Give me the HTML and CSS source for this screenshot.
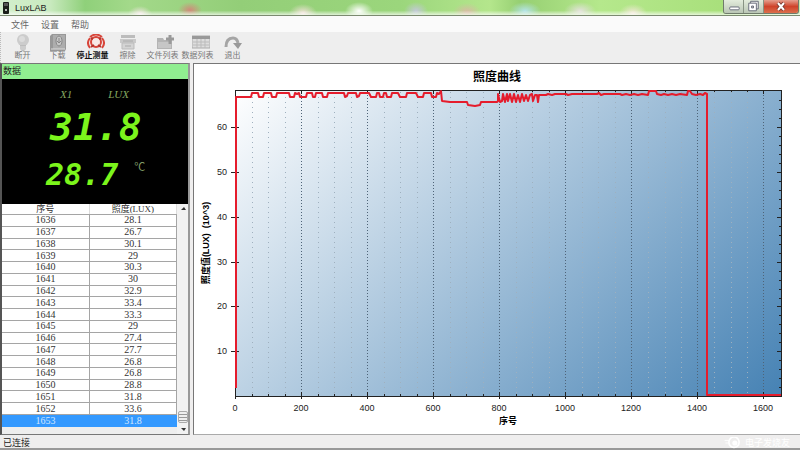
FILE: index.html
```html
<!DOCTYPE html>
<html lang="zh-CN">
<head>
<meta charset="utf-8">
<title>LuxLAB</title>
<link rel="stylesheet" href="styles.css">
</head>
<body>
<header class="titlebar">
  <svg class="app-icon" viewBox="0 0 6 12" aria-hidden="true"><rect width="6" height="12" rx="1" fill="#1b1f1a"/><rect x="1" y="1" width="4" height="3" fill="#555"/><circle cx="3" cy="8" r="1" fill="#eee"/></svg>
  <span class="app-name">LuxLAB</span>
  <div class="window-buttons">
    <button class="win" aria-label="最小化"><svg viewBox="0 0 20 13"><rect x="6" y="7" width="10" height="3" rx="1" fill="#fff" stroke="#666a78"/></svg></button>
    <button class="win" aria-label="还原"><svg viewBox="0 0 20 13"><path d="M7 1h8v8h-8z" fill="#eee" stroke="#666a78"/><path d="M5 3h8v8h-8z" fill="#fff" stroke="#666a78"/><path d="M8 6h2v2h-2z" fill="#ccc" stroke="#666a78"/></svg></button>
    <button class="win win-close" aria-label="关闭"><svg viewBox="0 0 34 13"><path d="M14 3l6 7M20 3l-6 7" stroke="#7b3b33" stroke-width="4"/><path d="M14 3l6 7M20 3l-6 7" stroke="#fff" stroke-width="2"/></svg></button>
  </div>
</header>
<nav class="menubar">
  <button>文件</button><button>设置</button><button>帮助</button>
</nav>
<div class="toolbar">
  <button class="tool"><svg viewBox="0 0 18 17"><circle cx="9" cy="6" r="6" fill="#ccc"/><circle cx="8" cy="5" r="3" fill="#dcdcdc"/><path d="M6 11h6v4l-2 2h-2l-2-2z" fill="#bdbdbd"/><path d="M6 13h6M6 15h6" stroke="#ddd"/></svg><span>断开</span></button>
  <button class="tool"><svg viewBox="0 0 18 17"><path d="M1 2l2-2h14v15l-1 2h-15z" fill="#989898"/><path d="M4 1h12v14h-12z" fill="#adadad"/><ellipse cx="10" cy="7" rx="3" ry="5" fill="#c8c8c8" stroke="#888"/><path d="M10 4v5M8 7l2 2 2-2" stroke="#888" fill="none"/><path d="M2 15h14" stroke="#ddd"/></svg><span>下载</span></button>
  <button class="tool tool-on"><svg class="shift" viewBox="0 0 18 17"><circle cx="9" cy="8" r="5" fill="#f8e9e6" stroke="#d8453a" stroke-width="2"/><path d="M3 3q6-5 12 0" fill="none" stroke="#d8453a" stroke-width="2"/><path d="M3 4q-4 5 0 10M15 4q4 5 0 10" fill="none" stroke="#d8453a" stroke-width="2"/><path d="M4 13l3-2M14 13l-3-2M4 4l2 1M14 4l-2 1" stroke="#b3332c" stroke-width="2"/></svg><span>停止测量</span></button>
  <button class="tool"><svg viewBox="0 0 18 17"><path d="M2 1h14v3h-14z" fill="#bcbcbc"/><path d="M1 5h16v4h-16z" fill="#c9c9c9"/><path d="M3 9h12v6h-12z" fill="#d4d4d4" stroke="#bbb"/><path d="M4 7h10M6 12h6" stroke="#aaa"/></svg><span>擦除</span></button>
  <button class="tool"><svg class="shift" viewBox="0 0 18 17"><path d="M0 4h6l1 2h8v9h-15z" fill="#b4b4b4"/><path d="M1 8h13v6h-13z" fill="#c6c6c6"/><path d="M13 1v9M9 5h8" stroke="#999" stroke-width="3"/></svg><span>文件列表</span></button>
  <button class="tool"><svg class="shift" viewBox="0 0 18 17"><path d="M0 2h18v12h-18z" fill="#ddd" stroke="#aaa"/><path d="M0 2h18v3h-18z" fill="#999"/><path d="M1 8h16M1 11h16M5 5v9M9 5v9M13 5v9" stroke="#bbb"/></svg><span>数据列表</span></button>
  <button class="tool"><svg viewBox="0 0 18 17"><path d="M2 13q0-9 7-9q4 0 5 5" fill="none" stroke="#a5a5a5" stroke-width="3"/><path d="M9 9h9l-4 6z" fill="#999"/></svg><span>退出</span></button>
</div>
<main class="workspace">
  <section class="panel">
    <h2 class="panel-title">数据</h2>
    <div class="readout">
      <div class="modes"><span>X1</span><span>LUX</span></div>
      <div class="lux">31.8</div>
      <div class="temp"><span class="temp-value">28.7</span><span class="unit">℃</span></div>
    </div>
    <div class="records">
      <table>
        <thead><tr><th>序号</th><th>照度(LUX)</th></tr></thead>
        <tbody>
          <tr><td>1636</td><td>28.1</td></tr>
          <tr><td>1637</td><td>26.7</td></tr>
          <tr><td>1638</td><td>30.1</td></tr>
          <tr><td>1639</td><td>29</td></tr>
          <tr><td>1640</td><td>30.3</td></tr>
          <tr><td>1641</td><td>30</td></tr>
          <tr><td>1642</td><td>32.9</td></tr>
          <tr><td>1643</td><td>33.4</td></tr>
          <tr><td>1644</td><td>33.3</td></tr>
          <tr><td>1645</td><td>29</td></tr>
          <tr><td>1646</td><td>27.4</td></tr>
          <tr><td>1647</td><td>27.7</td></tr>
          <tr><td>1648</td><td>26.8</td></tr>
          <tr><td>1649</td><td>26.8</td></tr>
          <tr><td>1650</td><td>28.8</td></tr>
          <tr><td>1651</td><td>31.8</td></tr>
          <tr><td>1652</td><td>33.6</td></tr>
          <tr class="selected"><td>1653</td><td>31.8</td></tr>
        </tbody>
      </table>
      <div class="scrollbar" aria-hidden="true">
        <svg viewBox="0 0 12 10"><path d="M4 6h5l-2-3z" fill="#333"/></svg>
        <i class="thumb"></i>
        <svg viewBox="0 0 12 10"><path d="M4 4h5l-2 3z" fill="#333"/></svg>
      </div>
    </div>
  </section>
  <section class="chart">
    <svg viewBox="194 64 606 370" role="img" aria-label="照度曲线">
      <defs>
        <linearGradient id="sky" gradientUnits="userSpaceOnUse" x1="235" y1="90" x2="660" y2="515"><stop offset="0" stop-color="#fff"/><stop offset="1" stop-color="#4682b4"/></linearGradient>
      </defs>
      <text class="chart-title" x="497" y="81">照度曲线</text>
      <rect x="235" y="90" width="546" height="306" fill="url(#sky)"/>
      <path class="grid-minor" d="M252 92V395M268 92V395M285 92V395M318 92V395M334 92V395M351 92V395M384 92V395M400 92V395M417 92V395M450 92V395M466 92V395M483 92V395M516 92V395M532 92V395M549 92V395M582 92V395M598 92V395M615 92V395M648 92V395M665 92V395M681 92V395M714 92V395M731 92V395M747 92V395"/>
      <path class="grid-major" d="M301 92V395M367 92V395M433 92V395M499 92V395M565 92V395M631 92V395M697 92V395M763 92V395"/>
      <path class="axis" d="M235 90H781V396H235z"/>
      <path class="axis" d="M231 127H239M231 172H239M231 217H239M231 262H239M231 306H239M231 351H239M777 127H781M777 172H781M777 217H781M777 262H781M777 306H781M777 351H781M779 100H781M779 109H781M779 118H781M779 136H781M779 145H781M779 154H781M779 163H781M779 181H781M779 190H781M779 199H781M779 208H781M779 226H781M779 235H781M779 244H781M779 253H781M779 271H781M779 280H781M779 289H781M779 298H781M779 315H781M779 324H781M779 333H781M779 342H781M779 360H781M779 369H781M779 378H781M779 387H781"/>
      <path class="axis" d="M235 392V399M301 392V399M367 392V399M433 392V399M499 392V399M565 392V399M631 392V399M697 392V399M763 392V399M301 90V94M367 90V94M433 90V94M499 90V94M565 90V94M631 90V94M697 90V94M763 90V94M252 394V396M268 394V396M285 394V396M318 394V396M334 394V396M351 394V396M384 394V396M400 394V396M417 394V396M450 394V396M466 394V396M483 394V396M516 394V396M532 394V396M549 394V396M582 394V396M598 394V396M615 394V396M648 394V396M665 394V396M681 394V396M714 394V396M731 394V396M747 394V396M516 90V92M532 90V92M549 90V92M582 90V92M598 90V92M615 90V92M665 90V92M714 90V92M731 90V92M747 90V92"/>
      <path class="series" d="M236 388V97H251L252 93H258L259 97H263L264 93H271L272 97H276L277 93H289L290 97H294L295 93L297 94L299 93L300 97H306L307 93H312L313 97H315L316 93H322L323 97H327L328 93H344L345 97L347 96L348 93H356L357 97L359 96L360 93H369L371 97H376L377 93H379L380 97H383L384 93H386L387 97H391L392 93H398L400 97H406L407 93H416L418 97H423L424 93H431L432 97H436L437 93L439 94L441 91L442 101L450 102H467L468 105L475 106L480 105L481 102H497L498 101V94L500 102L502 101L503 94L505 102L507 94L508 101L510 94L512 102L514 94L516 102L518 95L520 102L522 94L524 101L526 95L528 101L530 95L532 94L533 101L535 95L537 95L538 102L539 95H546L548 94L552 95L555 94H566L568 95L572 94H597L599 93L601 95L604 94H620L622 95L626 94L630 95L634 94L638 95L642 94L648 95L649 91H656L657 94L661 95L664 94L668 95L672 94L676 95L680 94L687 95L688 91H690L692 94L696 95L700 94L703 95L705 93L707 94V395H781"/>
      <g class="ticks-y"><text x="227" y="130">60</text><text x="227" y="175">50</text><text x="227" y="220">40</text><text x="227" y="265">30</text><text x="227" y="309">20</text><text x="227" y="354">10</text></g>
      <g class="ticks-x"><text x="235" y="411">0</text><text x="301" y="411">200</text><text x="367" y="411">400</text><text x="433" y="411">600</text><text x="499" y="411">800</text><text x="565" y="411">1000</text><text x="631" y="411">1200</text><text x="697" y="411">1400</text><text x="763" y="411">1600</text></g>
      <text class="axis-title" x="508" y="424">序号</text>
      <text class="axis-title" transform="translate(209 243) rotate(-90)">照度值(LUX)  (10^3)</text>
    </svg>
  </section>
</main>
<footer class="statusbar"><span>已连接</span>
  <div class="watermark"><svg viewBox="0 0 22 14" aria-hidden="true"><circle cx="11" cy="6" r="6" fill="none" stroke="#fff" stroke-width="2"/><circle cx="12" cy="7" r="3" fill="#fff"/><path d="M0 4h6M1 7h4" stroke="#fff"/></svg><span>电子发烧友</span></div>
</footer>
</body>
</html>
```
FILE: styles.css
```css
* { box-sizing: border-box; }
body {
  margin: 0;
  min-height: 100vh;
  display: flex;
  flex-direction: column;
  background: #efeeee;
  color: #222;
  font: 9px/12px "Liberation Sans", "Noto Sans CJK SC", sans-serif;
}
button { border: 0; padding: 0; background: none; font: inherit; color: inherit; }
svg { display: block; }

.titlebar {
  display: flex;
  align-items: center;
  height: 16px;
  padding-left: 3px;
  border-bottom: 1px solid #7b8a70;
  background:
    linear-gradient(#fff0 70%, #ffffffb0),
    radial-gradient(ellipse 12px 8px at 140px 14px, #f5e6e6, #fff0),
    radial-gradient(ellipse 12px 8px at 190px 10px, #d08a7a, #fff0),
    radial-gradient(ellipse 14px 9px at 303px 13px, #f3e2da, #fff0),
    radial-gradient(ellipse 14px 9px at 359px 11px, #fff, #fff0),
    radial-gradient(ellipse 12px 9px at 416px 11px, #c3c9d8, #fff0),
    radial-gradient(ellipse 14px 9px at 467px 12px, #d9bba5, #fff0),
    radial-gradient(ellipse 16px 9px at 525px 11px, #b5e4e8, #fff0),
    radial-gradient(ellipse 16px 9px at 580px 11px, #e4e2dc, #fff0),
    radial-gradient(ellipse 14px 9px at 633px 13px, #f3e8d8, #fff0),
    linear-gradient(90deg, #d3efcd, #c9eabf 50px, #8fd07a 85px, #a3d98a 130px, #93ce78 240px, #9bd67c 400px, #b4e68c 490px, #96cf72 520px, #b5e88c 600px, #a9e07c 720px, #c5ebac);
}
.app-icon { width: 6px; height: 12px; }
.app-name { margin-left: 6px; }
.window-buttons {
  display: flex;
  align-self: flex-start;
  margin: 0 1px 0 auto;
  border: 1px solid #6f7b6b;
  border-top: 0;
  border-radius: 0 0 3px 3px;
  overflow: hidden;
}
.win { width: 20px; height: 13px; border-right: 1px solid #889383; background: linear-gradient(#e3ecdc, #bac6b5); }
.win svg { width: 100%; height: 13px; }
.win-close { width: 34px; border: 0; background: linear-gradient(#e5a08f, #cf432b 50%, #dc6f4d); }

.menubar { display: flex; gap: 12px; height: 16px; padding: 1px 0 0 11px; background: #fafafa; color: #666; }
.toolbar { display: flex; height: 31px; padding: 2px 0 0 4px; background: #eee; border-left: 1px dotted #bbb; }
.tool { width: 35px; display: flex; flex-direction: column; align-items: center; color: #777; font-size: 8px; line-height: 10px; white-space: nowrap; }
.tool svg { width: 18px; height: 17px; flex: none; }
.tool .shift { margin-left: 6px; }
.tool-on { color: #111; font-weight: bold; }

.workspace { flex: 1; display: grid; grid-template-columns: 190px minmax(0, 1fr); gap: 3px; }
.panel { display: flex; flex-direction: column; border: 1px solid #777; border-left: 2px solid #555; border-right: 2px solid #999; background: #eee; }
.panel-title { margin: 0; height: 15px; padding-left: 1px; background: #90ee90; font-size: 9px; font-weight: normal; line-height: 15px; }
.readout { height: 125px; padding: 8px 0 0 44px; background: #000; color: #7cf51c; font-family: "DejaVu Sans Mono", monospace; font-style: italic; font-weight: bold; }
.modes { display: flex; gap: 36px; padding-left: 14px; color: #84a860; font: italic 11px/14px "Liberation Serif", serif; }
.lux { padding-left: 4px; font-size: 38px; line-height: 52px; }
.temp { display: flex; gap: 16px; font-size: 30px; line-height: 44px; }
.unit { padding-top: 5px; color: #7f9a66; font: 11px/16px "Noto Sans CJK SC", sans-serif; }

.records { flex: 1; display: flex; align-items: flex-start; }
table { width: 100%; height: 223px; border-collapse: collapse; table-layout: fixed; background: #fff; color: #333; text-align: center; font: 10px/10px "Liberation Serif", "Noto Sans CJK SC", serif; }
th, td { padding: 0; border-right: 1px solid #a5a5a5; border-bottom: 1px solid #a5a5a5; }
th { font-size: 9px; font-weight: normal; border-right-color: #ddd; }
.selected td { background: #3399ff; border-color: #3399ff; color: #d4e8ff; }
.scrollbar { flex: none; align-self: stretch; width: 11px; display: flex; flex-direction: column; background: #f2f2f2; }
.scrollbar svg { width: 12px; height: 10px; }
.thumb { height: 12px; margin: auto 0 1px 1px; border: 1px solid #aaa; border-radius: 2px; background: repeating-linear-gradient(#eee 0 2px, #999 2px 3px); }

.chart { border: 1px solid #777; border-right: 0; border-bottom-color: #aaa; background: #fff; }
.chart svg { width: 100%; }
.chart text { font-size: 9px; fill: #222; text-anchor: middle; }
.chart .chart-title { font-size: 12px; font-weight: bold; fill: #000; }
.chart .axis-title { font-weight: bold; white-space: pre; fill: #000; }
.chart .ticks-y text { text-anchor: end; }
.axis, .grid-major, .grid-minor { fill: none; stroke: #222; shape-rendering: crispEdges; }
.grid-major { stroke: #4f6478; stroke-dasharray: 1 2; }
.grid-minor { stroke: #9fb0be; stroke-dasharray: 1 4; }
.series { fill: none; stroke: #e51c2c; stroke-width: 2; stroke-linejoin: round; }

.statusbar { display: flex; justify-content: space-between; height: 15px; padding: 2px 10px 0 3px; border-bottom: 2px solid #999; }
.watermark { display: flex; color: #fff; font-size: 9px; }
.watermark svg { width: 22px; height: 12px; }
```
